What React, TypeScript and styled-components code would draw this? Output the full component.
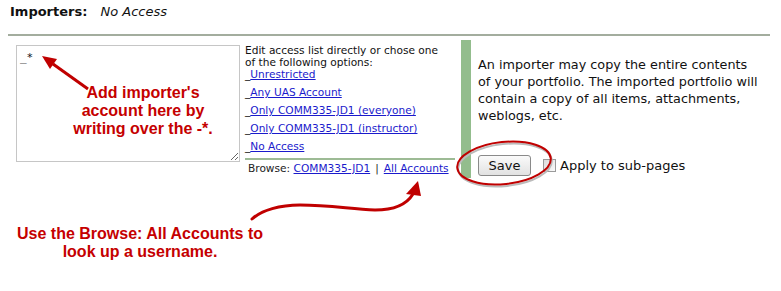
import React from 'react'
import styled, { createGlobalStyle } from 'styled-components'

const Global = createGlobalStyle`
  body {
    margin: 0;
    background: #fff;
    font-family: "DejaVu Sans", Verdana, sans-serif;
    color: #111;
  }
`

const Page = styled.div`
  position: relative;
  width: 781px;
  height: 291px;
  padding: 4px 0 0 8px;
  box-sizing: border-box;
  overflow: hidden;
`

const Header = styled.div`
  display: flex;
  gap: 13px;
  padding-left: 2px;
  font-size: 13px;
  line-height: 16px;
`

const Label = styled.b`
  font-weight: bold;
`

const Status = styled.i`
  font-style: italic;
`

const Divider = styled.div`
  margin-top: 14px;
  width: 762px;
  height: 2px;
  background: #a3ad9e;
`

const Main = styled.div`
  display: flex;
  margin-top: 4px;
  padding-left: 8px;
`

const Box = styled.textarea`
  width: 224px;
  height: 117px;
  margin-top: 5px;
  box-sizing: border-box;
  border: 1px solid #c6c6c6;
  padding: 5px 3px;
  font-family: "DejaVu Sans Mono", monospace;
  font-size: 11px;
  line-height: 14px;
  color: #111;
  resize: both;
  outline: none;
`

const Options = styled.div`
  width: 210px;
  margin-left: 5px;
  padding-top: 4px;
  font-size: 10.6px;
  line-height: 12px;
  color: #111;
`

const Intro = styled.div`
  width: 204px;
`

const OptionList = styled.div`
  display: flex;
  flex-direction: column;
  gap: 6px;
`

const Option = styled.div`
  display: flex;
`

const Link = styled.a`
  color: #1a1acc;
  text-decoration: underline;
  cursor: pointer;
`

const Rule = styled.div`
  height: 2px;
  margin-top: 6px;
  background: #9dbb95;
`

const Browse = styled.div`
  display: flex;
  margin-top: 2px;
  padding-left: 3px;
  color: #222;
  white-space: pre;
`

const Sep = styled.span`
  margin: 0 5px;
`

const Bar = styled.div`
  width: 10px;
  height: 138px;
  margin-left: 6px;
  background: #93bd8d;
`

const Side = styled.div`
  padding: 16px 0 0 7px;
  font-size: 12.8px;
  line-height: 17px;
`

const Blurb = styled.p`
  margin: 0;
  white-space: nowrap;
`

const SaveRow = styled.div`
  display: flex;
  align-items: center;
  margin-top: 31px;
`

const SaveButton = styled.button`
  width: 53px;
  height: 21px;
  padding: 0;
  border: 1px solid #8a8a8a;
  border-radius: 3px;
  background: linear-gradient(#fafafa, #e2e2e2);
  font-family: "DejaVu Sans", Verdana, sans-serif;
  font-size: 13px;
  color: #111;
`

const Check = styled.input`
  appearance: none;
  width: 13px;
  height: 13px;
  margin: 0 4px 0 12px;
  border: 1px solid #9a9a9a;
  background: linear-gradient(135deg, #dcdcdc, #fafafa);
`

const CheckLabel = styled.label`
  font-size: 13px;
`

const Overlay = styled.svg`
  position: absolute;
  left: 0;
  top: 0;
  pointer-events: none;
`

const Note = styled.div<{ $left: number; $top: number; $width: number }>`
  position: absolute;
  left: ${p => p.$left}px;
  top: ${p => p.$top}px;
  width: ${p => p.$width}px;
  text-align: center;
  font-family: "Liberation Sans", Arial, sans-serif;
  font-weight: bold;
  font-size: 16px;
  line-height: 18px;
  color: #c50000;
`

const options = [
  'Unrestricted',
  'Any UAS Account',
  'Only COMM335-JD1 (everyone)',
  'Only COMM335-JD1 (instructor)',
  'No Access',
]

const App: React.FC = () => {
  return (
    <Page>
      <Global />
      <Header>
        <Label>Importers:</Label>
        <Status>No Access</Status>
      </Header>
      <Divider />
      <Main>
        <Box defaultValue="_*" />
        <Options>
          <Intro>Edit access list directly or chose one of the following options:</Intro>
          <OptionList>
            {options.map(o => (
              <Option key={o}>
                _<Link>{o}</Link>
              </Option>
            ))}
          </OptionList>
          <Rule />
          <Browse>
            Browse: <Link>COMM335-JD1</Link>
            <Sep>|</Sep>
            <Link>All Accounts</Link>
          </Browse>
        </Options>
        <Bar />
        <Side>
          <Blurb>
            An importer may copy the entire contents
            <br />
            of your portfolio. The imported portfolio will
            <br />
            contain a copy of all items, attachments,
            <br />
            weblogs, etc.
          </Blurb>
          <SaveRow>
            <SaveButton>Save</SaveButton>
            <Check type="checkbox" id="sub" />
            <CheckLabel htmlFor="sub">Apply to sub-pages</CheckLabel>
          </SaveRow>
        </Side>
      </Main>

      <Note $left={58} $top={84} $width={170}>
        Add importer's
        <br />
        account here by
        <br />
        writing over the -*.
      </Note>
      <Note $left={0} $top={225} $width={280}>
        Use the Browse: All Accounts to
        <br />
        look up a username.
      </Note>

      <Overlay width={781} height={291} viewBox="0 0 781 291">
        <line x1={88} y1={89} x2={53} y2={64} stroke="#c00000" strokeWidth={3} />
        <polygon points="42,56 57,59 50,69" fill="#c00000" />
        <path
          d="M252,219 C262,210 280,205 300,205 C330,205 350,209 375,210 C395,210 407,204 413,194"
          fill="none"
          stroke="#c00000"
          strokeWidth={3}
          strokeLinecap="round"
        />
        <polygon points="418,181 406,194 421,196" fill="#c00000" />
        <ellipse cx={505} cy={165} rx={47} ry={21} fill="none" stroke="#bbb" strokeWidth={2} transform="rotate(-6 505 165)" />
        <ellipse cx={504} cy={163} rx={47} ry={21} fill="none" stroke="#c00000" strokeWidth={2} transform="rotate(-6 504 163)" />
      </Overlay>
    </Page>
  )
}

export default App
